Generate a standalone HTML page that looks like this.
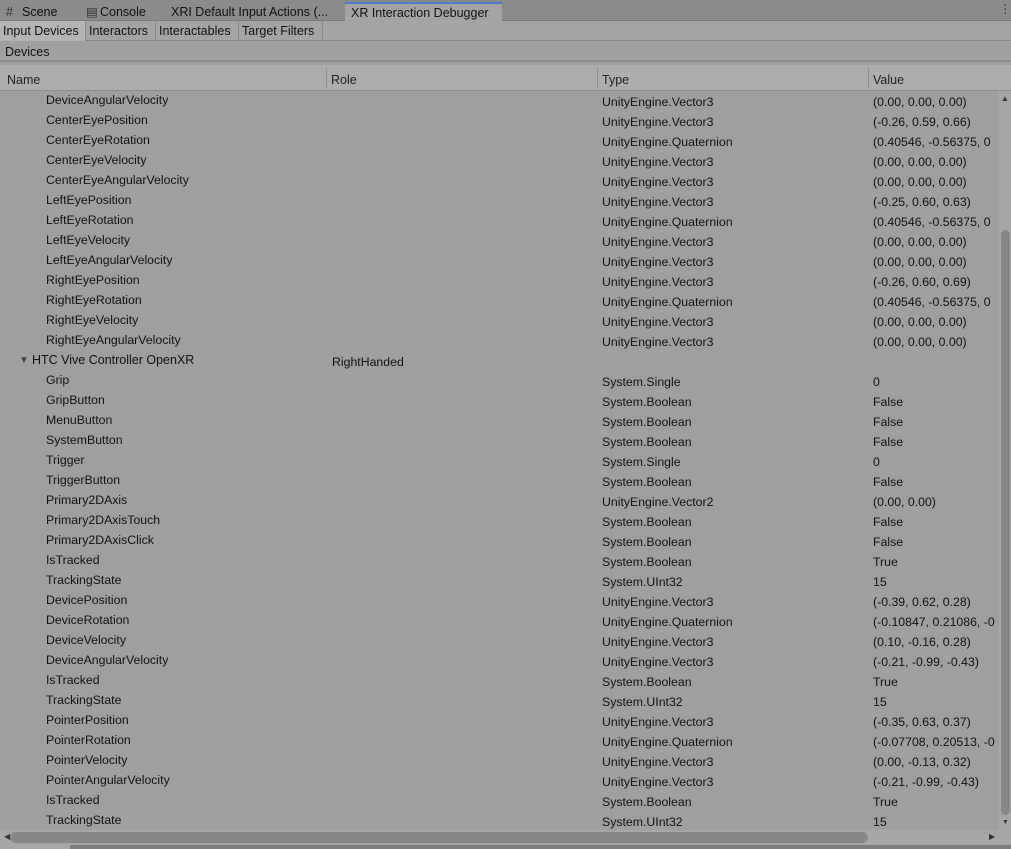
<!DOCTYPE html>
<html><head><meta charset="utf-8"><style>
*{margin:0;padding:0;box-sizing:border-box}
body{width:1011px;height:849px;background:#9f9f9f;font-family:"Liberation Sans",sans-serif;font-size:12px;color:#111;position:relative;overflow:hidden}
.abs{position:absolute;white-space:nowrap}
#tabbar{left:0;top:0;width:1011px;height:21px;background:#8b8b8b;border-bottom:1px solid #7a7a7a}
.tab{position:absolute;top:4px;height:18px;line-height:17px;font-size:12.5px;color:#111}
#sub{left:0;top:21px;width:1011px;height:20px;background:#a4a4a4;border-bottom:1px solid #8a8a8a}
.st{position:absolute;top:0;height:20px;line-height:20px;font-size:12.5px;border-right:1px solid #8a8a8a;padding:0 3px}
#dev{left:0;top:41px;width:1011px;height:21px;background:#a0a0a0;border-bottom:2px solid #8c8c8c;line-height:22px;padding-left:5px;font-size:12.5px}
#hdr{left:0;top:65px;width:1011px;height:26px;background:#adadad;border-bottom:1px solid #8e8e8e}
.h{position:absolute;top:8px;font-size:12.5px;color:#222}
.dv{position:absolute;top:3px;width:1px;height:20px;background:#8f8f8f}
.r{position:absolute;left:0;width:999px;height:20px;font-size:12.3px}
.r span{position:absolute;top:2px}
</style></head><body>
<div id="tabbar" class="abs">
 <div class="tab" style="left:6px;color:#333">#</div>
 <div class="tab" style="left:22px">Scene</div>
 <div class="tab" style="left:86px;color:#333">&#9636;</div>
 <div class="tab" style="left:100px">Console</div>
 <div class="tab" style="left:171px">XRI Default Input Actions (...</div>
 <div class="tab" style="left:345px;top:2px;width:157px;height:20px;line-height:19px;background:#a4a4a4;border-top:2px solid #4a7fc7;padding-left:6px">XR Interaction Debugger</div>
 <div class="tab" style="left:999px;top:1px;color:#333">&#8942;</div>
</div>
<div id="sub" class="abs">
 <div class="st" style="left:0;width:86px;background:#b4b4b4">Input Devices</div>
 <div class="st" style="left:86px;width:70px">Interactors</div>
 <div class="st" style="left:156px;width:83px">Interactables</div>
 <div class="st" style="left:239px;width:84px">Target Filters</div>
</div>
<div id="dev" class="abs">Devices</div>
<div id="hdr" class="abs">
 <span class="h" style="left:7px">Name</span>
 <div class="dv" style="left:326px"></div><span class="h" style="left:331px">Role</span>
 <div class="dv" style="left:597px"></div><span class="h" style="left:602px">Type</span>
 <div class="dv" style="left:868px"></div><span class="h" style="left:873px">Value</span>
</div>
<div id="rows"></div>
<div class="abs" style="left:999px;top:91px;width:12px;height:739px;background:#a6a6a6"></div>
<div class="abs" style="left:1001px;top:94px;font-size:8px;color:#333">&#9650;</div>
<div class="abs" style="left:1001px;top:230px;width:9px;height:585px;background:#878787;border-radius:5px"></div>
<div class="abs" style="left:1002px;top:819px;font-size:7px;color:#333">&#9660;</div>
<div class="abs" style="left:0;top:830px;width:1011px;height:15px;background:#a6a6a6"></div>
<div class="abs" style="left:4px;top:832px;font-size:8px;color:#333">&#9664;</div>
<div class="abs" style="left:10px;top:832px;width:858px;height:11px;background:#878787;border-radius:6px"></div>
<div class="abs" style="left:989px;top:832px;font-size:8px;color:#333">&#9654;</div>
<div class="abs" style="left:0;top:845px;width:1011px;height:4px;background:#7d7d7d"></div>
<div class="abs" style="left:0;top:845px;width:70px;height:4px;background:#a8a8a8"></div>
<script>
var d=[
["DeviceAngularVelocity","","UnityEngine.Vector3","(0.00, 0.00, 0.00)"],
["CenterEyePosition","","UnityEngine.Vector3","(-0.26, 0.59, 0.66)"],
["CenterEyeRotation","","UnityEngine.Quaternion","(0.40546, -0.56375, 0"],
["CenterEyeVelocity","","UnityEngine.Vector3","(0.00, 0.00, 0.00)"],
["CenterEyeAngularVelocity","","UnityEngine.Vector3","(0.00, 0.00, 0.00)"],
["LeftEyePosition","","UnityEngine.Vector3","(-0.25, 0.60, 0.63)"],
["LeftEyeRotation","","UnityEngine.Quaternion","(0.40546, -0.56375, 0"],
["LeftEyeVelocity","","UnityEngine.Vector3","(0.00, 0.00, 0.00)"],
["LeftEyeAngularVelocity","","UnityEngine.Vector3","(0.00, 0.00, 0.00)"],
["RightEyePosition","","UnityEngine.Vector3","(-0.26, 0.60, 0.69)"],
["RightEyeRotation","","UnityEngine.Quaternion","(0.40546, -0.56375, 0"],
["RightEyeVelocity","","UnityEngine.Vector3","(0.00, 0.00, 0.00)"],
["RightEyeAngularVelocity","","UnityEngine.Vector3","(0.00, 0.00, 0.00)"],
["*HTC Vive Controller OpenXR","RightHanded","",""],
["Grip","","System.Single","0"],
["GripButton","","System.Boolean","False"],
["MenuButton","","System.Boolean","False"],
["SystemButton","","System.Boolean","False"],
["Trigger","","System.Single","0"],
["TriggerButton","","System.Boolean","False"],
["Primary2DAxis","","UnityEngine.Vector2","(0.00, 0.00)"],
["Primary2DAxisTouch","","System.Boolean","False"],
["Primary2DAxisClick","","System.Boolean","False"],
["IsTracked","","System.Boolean","True"],
["TrackingState","","System.UInt32","15"],
["DevicePosition","","UnityEngine.Vector3","(-0.39, 0.62, 0.28)"],
["DeviceRotation","","UnityEngine.Quaternion","(-0.10847, 0.21086, -0"],
["DeviceVelocity","","UnityEngine.Vector3","(0.10, -0.16, 0.28)"],
["DeviceAngularVelocity","","UnityEngine.Vector3","(-0.21, -0.99, -0.43)"],
["IsTracked","","System.Boolean","True"],
["TrackingState","","System.UInt32","15"],
["PointerPosition","","UnityEngine.Vector3","(-0.35, 0.63, 0.37)"],
["PointerRotation","","UnityEngine.Quaternion","(-0.07708, 0.20513, -0"],
["PointerVelocity","","UnityEngine.Vector3","(0.00, -0.13, 0.32)"],
["PointerAngularVelocity","","UnityEngine.Vector3","(-0.21, -0.99, -0.43)"],
["IsTracked","","System.Boolean","True"],
["TrackingState","","System.UInt32","15"]];
var h="";
d.forEach(function(r,i){
 var top=91+20*i, n=r[0], nm;
 if(n[0]=="*"){nm='<span style="left:19px;top:4px;font-size:10px;color:#444">&#9660;</span><span style="left:32px;font-size:12.5px">'+n.slice(1)+'</span>';}
 else nm='<span style="left:46px">'+n+'</span>';
 h+='<div class="r" style="top:'+top+'px">'+nm+'<span style="left:332px;top:'+(r[1]?4:2)+'px">'+r[1]+'</span><span style="left:602px;top:4px">'+r[2]+'</span><span style="left:873px;top:4px">'+r[3]+'</span></div>';
});
document.getElementById("rows").innerHTML=h;
</script>
</body></html>
